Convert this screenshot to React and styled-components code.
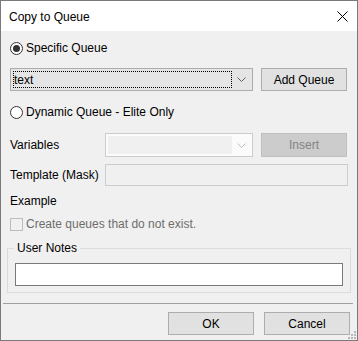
import React from "react";
import styled, { createGlobalStyle } from "styled-components";

const Global = createGlobalStyle`
  html, body { margin: 0; padding: 0; background: #ffffff; }
  * { box-sizing: border-box; }
  body { font-family: "Liberation Sans", Arial, sans-serif; font-size: 12px; color: #000; }
`;

const Window = styled.div`
  position: relative;
  width: 358px;
  height: 341px;
  border: 1px solid #7a7a7a;
  background: #f0f0f0;
  display: flex;
  flex-direction: column;
`;

const TitleBar = styled.div`
  height: 30px;
  background: #ffffff;
  display: flex;
  align-items: center;
  justify-content: space-between;
  padding: 0 9px 0 8px;
`;

const Title = styled.span`
  font-size: 12px;
  margin-top: 1px;
`;

const Body = styled.div`
  display: flex;
  flex-direction: column;
  padding: 0 9px;
`;

const Row = styled.div`
  display: flex;
  align-items: center;
  margin-top: ${(p) => p.$mt}px;
  height: ${(p) => p.$h}px;
`;

const RadioCircle = styled.span`
  width: 13px;
  height: 13px;
  border-radius: 50%;
  border: 1px solid #333333;
  background: #ffffff;
  display: flex;
  align-items: center;
  justify-content: center;
  margin-right: 3px;
  &::after {
    content: "";
    width: 7px;
    height: 7px;
    border-radius: 50%;
    background: ${(p) => (p.$checked ? "#333333" : "transparent")};
  }
`;

const Label = styled.span`
  color: ${(p) => (p.$disabled ? "#6d6d6d" : "#000")};
  width: ${(p) => (p.$w ? p.$w + "px" : "auto")};
  flex: none;
`;

const Combo = styled.div`
  width: ${(p) => p.$w}px;
  height: ${(p) => p.$h}px;
  border: 1px solid ${(p) => (p.$disabled ? "#cccccc" : "#adadad")};
  background: ${(p) => (p.$disabled ? "#fbfbfb" : "#e5e5e5")};
  display: flex;
  align-items: center;
  padding: 2px;
  flex: none;
`;

const ComboField = styled.div`
  flex: 1;
  height: 100%;
  border: 1px ${(p) => (p.$focus ? "dotted #000" : "solid transparent")};
  background: ${(p) => (p.$disabled ? "#f0f0f0" : "transparent")};
  display: flex;
  align-items: center;
  line-height: 14px;
`;

const Arrow = styled.div`
  width: 18px;
  display: flex;
  justify-content: center;
  align-items: center;
`;

const Button = styled.div`
  width: 86px;
  height: ${(p) => p.$h || 23}px;
  margin-left: ${(p) => p.$ml || 0}px;
  border: 1px solid ${(p) => (p.$disabled ? "#bfbfbf" : "#adadad")};
  background: ${(p) => (p.$disabled ? "#cccccc" : "#e1e1e1")};
  color: ${(p) => (p.$disabled ? "#838383" : "#000")};
  display: flex;
  align-items: center;
  justify-content: center;
  flex: none;
`;

const TextBox = styled.div`
  flex: 1;
  height: ${(p) => p.$h}px;
  border: 1px solid ${(p) => (p.$disabled ? "#cccccc" : "#7a7a7a")};
  background: ${(p) => (p.$disabled ? "#f0f0f0" : "#ffffff")};
`;

const CheckBox = styled.span`
  width: 13px;
  height: 13px;
  border: 1px solid #bcbcbc;
  background: #f0f0f0;
  margin-right: 3px;
  flex: none;
`;

const Group = styled.div`
  position: relative;
  margin: 16px -3px 0 -3px;
  height: 45px;
  border: 1px solid #dcdcdc;
  padding: 14px 7px 0 7px;
  display: flex;
`;

const Legend = styled.span`
  position: absolute;
  left: 6px;
  top: -9px;
  padding: 0 3px;
  background: #f0f0f0;
  line-height: 16px;
`;

const Footer = styled.div`
  margin: 10px 4px 0 2px;
  border-top: 1px solid #a0a0a0;
  padding: 8px 3px 0 0;
  display: flex;
  justify-content: flex-end;
  gap: 10px;
`;

const Grip = styled.svg`
  position: absolute;
  right: 1px;
  bottom: 1px;
`;

const Chevron = ({ color }) => (
  <svg width="9" height="5" viewBox="0 0 9 5">
    <path d="M0.5 0.5 L4.5 4.5 L8.5 0.5" fill="none" stroke={color} strokeWidth="1" />
  </svg>
);

export default function App() {
  return (
    <>
      <Global />
      <Window>
        <TitleBar>
          <Title>Copy to Queue</Title>
          <svg width="11" height="11" viewBox="0 0 11 11">
            <path d="M0.5 0.5 L10.5 10.5 M10.5 0.5 L0.5 10.5" stroke="#000" strokeWidth="1" />
          </svg>
        </TitleBar>
        <Body>
          <Row $mt={9} $h={16}>
            <RadioCircle $checked />
            <Label>Specific Queue</Label>
          </Row>
          <Row $mt={12} $h={23}>
            <Combo $w={243} $h={23}>
              <ComboField $focus>text</ComboField>
              <Arrow>
                <Chevron color="#606060" />
              </Arrow>
            </Combo>
            <Button $ml={8}>Add Queue</Button>
          </Row>
          <Row $mt={13} $h={16}>
            <RadioCircle />
            <Label>Dynamic Queue - Elite Only</Label>
          </Row>
          <Row $mt={13} $h={24}>
            <Label $w={95}>Variables</Label>
            <Combo $w={148} $h={24} $disabled>
              <ComboField $disabled />
              <Arrow>
                <Chevron color="#bcbcbc" />
              </Arrow>
            </Combo>
            <Button $h={24} $ml={8} $disabled>Insert</Button>
          </Row>
          <Row $mt={7} $h={22}>
            <Label $w={95}>Template (Mask)</Label>
            <TextBox $h={22} $disabled />
          </Row>
          <Row $mt={7} $h={16}>
            <Label>Example</Label>
          </Row>
          <Row $mt={7} $h={16}>
            <CheckBox />
            <Label $disabled>Create queues that do not exist.</Label>
          </Row>
          <Group>
            <Legend>User Notes</Legend>
            <TextBox $h={23} />
          </Group>
        </Body>
        <Footer>
          <Button>OK</Button>
          <Button>Cancel</Button>
        </Footer>
        <Grip width="8" height="8" viewBox="0 0 8 8">
          <rect x="6" y="0" width="2" height="2" fill="#b8b8b8" />
          <rect x="3" y="3" width="2" height="2" fill="#b8b8b8" />
          <rect x="6" y="3" width="2" height="2" fill="#b8b8b8" />
          <rect x="0" y="6" width="2" height="2" fill="#b8b8b8" />
          <rect x="3" y="6" width="2" height="2" fill="#b8b8b8" />
          <rect x="6" y="6" width="2" height="2" fill="#b8b8b8" />
        </Grip>
      </Window>
    </>
  );
}
